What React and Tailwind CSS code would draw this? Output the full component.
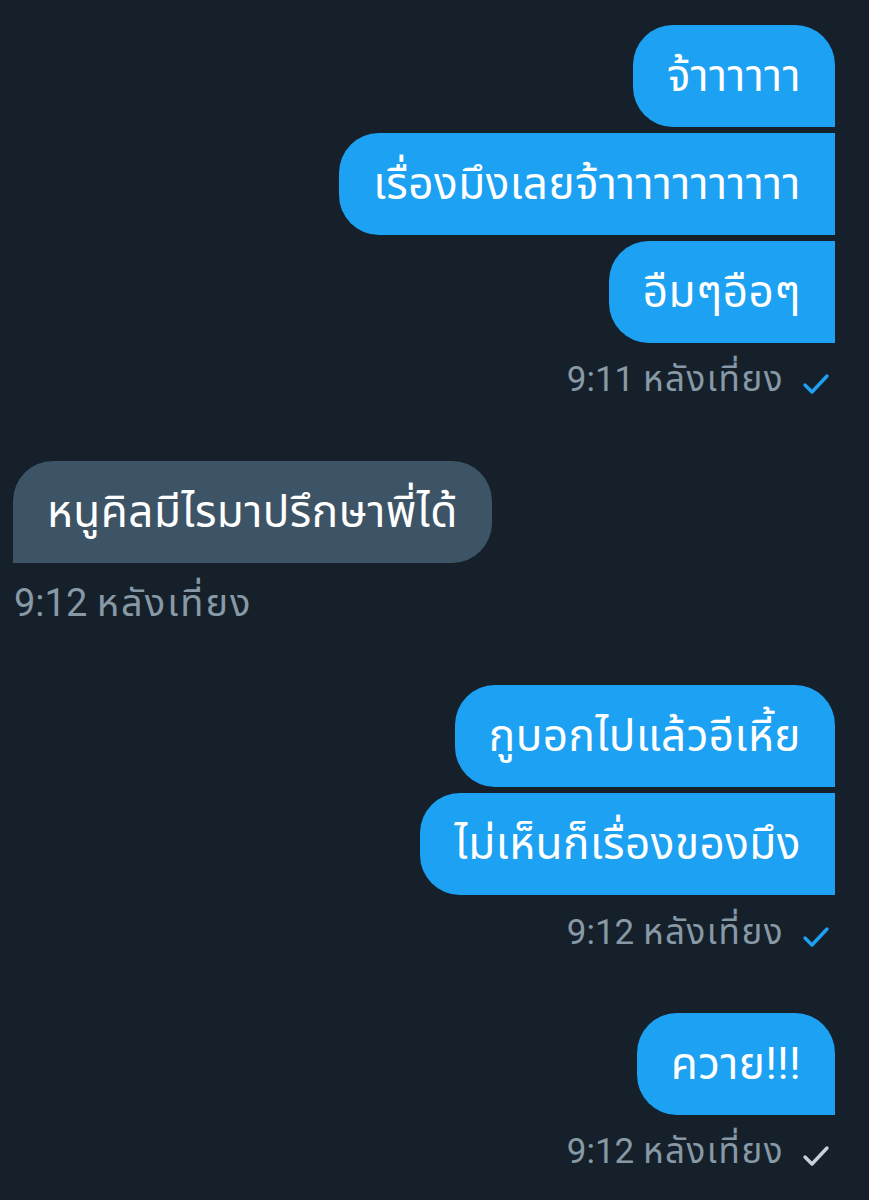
import React from 'react'

const FONT = { fontFamily: 'Roboto, "Noto Sans", "Noto Sans Thai", "DejaVu Sans", sans-serif' }

function Check({ color }) {
  return (
    <svg width="28" height="22" viewBox="0 0 28 22" fill="none" className="ml-[18px] mt-[8px]">
      <path d="M3 12l7 7L25 3" stroke={color} strokeWidth="3.4" strokeLinecap="round" strokeLinejoin="round" />
    </svg>
  )
}

function Sent({ text, shape }) {
  return (
    <div className={`h-[102px] flex items-center px-[34px] bg-[#1da1f2] text-white text-[44px] tracking-[0.5px] ${shape}`}>
      {text}
    </div>
  )
}

function Stamp({ time, check, className, size = 'text-[35px]', thai = 'tracking-[1.5px]' }) {
  return (
    <div className={`h-[40px] flex items-center text-[#8899a6] ${size} ${className}`}>
      <span>{time} <span className={thai}>หลังเที่ยง</span></span>
      {check && <Check color={check} />}
    </div>
  )
}

export default function App() {
  return (
    <div className="min-h-[1200px] bg-[#15202b] pt-[25px]" style={FONT}>
      {/* first group */}
      <div className="flex flex-col items-end gap-[6px] pr-[34px]">
        <Sent text="จ้าาาาาา" shape="rounded-l-[40px] rounded-tr-[40px]" />
        <Sent text="เรื่องมึงเลยจ้าาาาาาาาาาา" shape="rounded-l-[40px]" />
        <Sent text="อืมๆอือๆ" shape="rounded-l-[40px]" />
      </div>
      <Stamp time="9:11" check="#1da1f2" className="justify-end pr-[39px] mt-[17px]" />

      {/* received */}
      <div className="flex pl-[13px] mt-[61px]">
        <div className="h-[102px] flex items-center px-[34px] bg-[#3d5466] text-white text-[44px] tracking-[0.5px] rounded-r-[40px] rounded-tl-[40px]">
          หนูคิลมีไรมาปรึกษาพี่ได้
        </div>
      </div>
      <Stamp time="9:12" size="text-[38px]" thai="tracking-[2px]" className="pl-[14px] mt-[20px]" />

      {/* second group */}
      <div className="flex flex-col items-end gap-[6px] pr-[34px] mt-[62px]">
        <Sent text="กูบอกไปแล้วอีเหี้ย" shape="rounded-l-[40px] rounded-tr-[40px]" />
        <Sent text="ไม่เห็นก็เรื่องของมึง" shape="rounded-l-[40px]" />
      </div>
      <Stamp time="9:12" check="#1da1f2" className="justify-end pr-[39px] mt-[18px]" />

      {/* third */}
      <div className="flex flex-col items-end pr-[34px] mt-[60px]">
        <Sent text="ควาย!!!" shape="rounded-l-[40px] rounded-tr-[40px]" />
      </div>
      <Stamp time="9:12" check="#c9d1d8" className="justify-end pr-[39px] mt-[17px]" />
    </div>
  )
}
